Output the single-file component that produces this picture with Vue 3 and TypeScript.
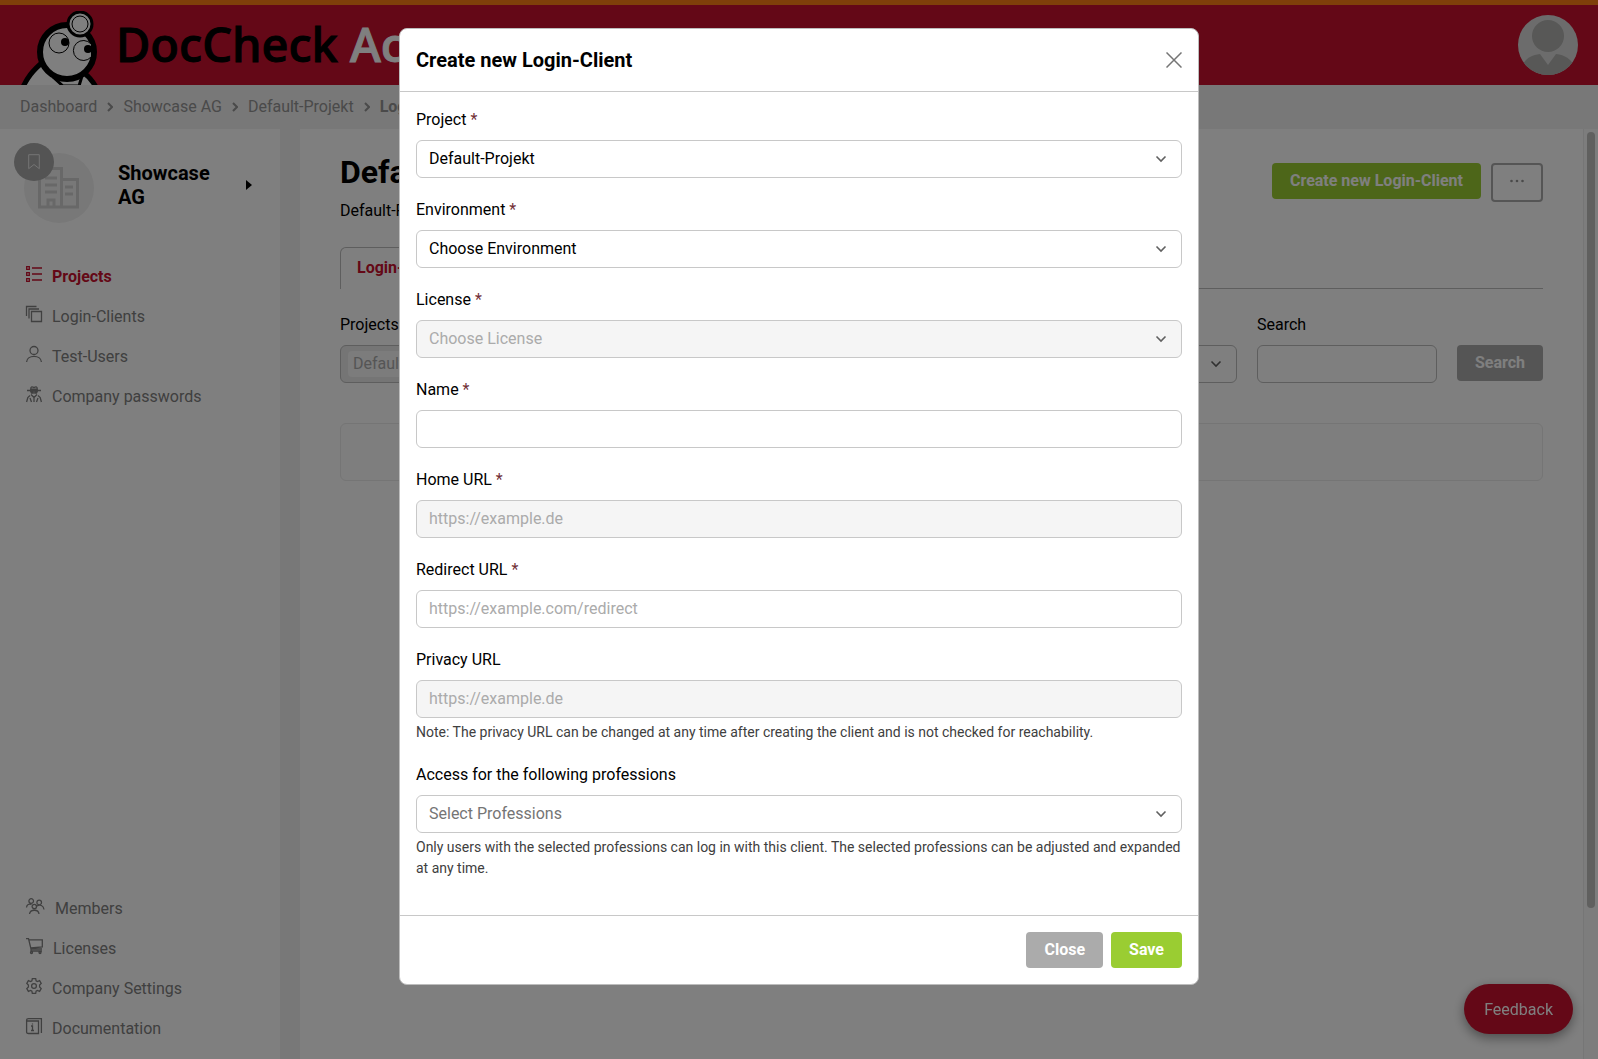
<script setup lang="ts">
import { ref } from 'vue'

interface Field {
  id: string
  label: string
  kind: 'select' | 'input'
  text: string
  required?: boolean
  disabled?: boolean
  muted?: boolean
  note?: string
}

interface NavItem {
  label: string
  icon: string
  width?: number
  active?: boolean
}

const fields: Field[] = [
  { id: 'project', label: 'Project', kind: 'select', text: 'Default-Projekt', required: true },
  { id: 'environment', label: 'Environment', kind: 'select', text: 'Choose Environment', required: true },
  { id: 'license', label: 'License', kind: 'select', text: 'Choose License', required: true, disabled: true },
  { id: 'name', label: 'Name', kind: 'input', text: '', required: true },
  { id: 'home', label: 'Home URL', kind: 'input', text: 'https://example.de', required: true, disabled: true },
  { id: 'redirect', label: 'Redirect URL', kind: 'input', text: 'https://example.com/redirect', required: true },
  {
    id: 'privacy', label: 'Privacy URL', kind: 'input', text: 'https://example.de', disabled: true,
    note: 'Note: The privacy URL can be changed at any time after creating the client and is not checked for reachability.',
  },
  {
    id: 'professions', label: 'Access for the following professions', kind: 'select', text: 'Select Professions', muted: true,
    note: 'Only users with the selected professions can log in with this client. The selected professions can be adjusted and expanded at any time.',
  },
]

const mainNav: NavItem[] = [
  { label: 'Projects', icon: 'list', active: true },
  { label: 'Login-Clients', icon: 'stack' },
  { label: 'Test-Users', icon: 'user' },
  { label: 'Company passwords', icon: 'spy' },
]

const footNav: NavItem[] = [
  { label: 'Members', icon: 'members', width: 19 },
  { label: 'Licenses', icon: 'cart', width: 17 },
  { label: 'Company Settings', icon: 'gear' },
  { label: 'Documentation', icon: 'book' },
]

const icons: Record<string, string> = {
  list: 'M.7.7h2.600v2.600H.7zM.7 6.700h2.600v2.600H.7zM.7 12.700h2.600v2.600H.7zM6 2h10M6 8h10M6 14h10',
  stack: 'M5.500 5.500h10v10h-10zM3 12.500V3h10M.5 10V.5h10',
  user: 'M12 4.500a4 4 0 1 1-8 0a4 4 0 0 1 8 0M.6 16c.4-7.500 14.400-7.500 14.800 0',
  spy: 'M1 4.500h14M4.500 4.500L5 1.500C6 0 7 1.500 8 1.500S10 0 11 1.500l.5 3M4.800 3.200h6.400M5 6h2.200v1H5.500zM8.800 6H11l-.5 1H8.800zM5 8.500l3 3 3-3M8 11.500V16M4 9.500L1.800 11.500.6 16M4 12l1.500 4M12 9.500l2.200 2L15.400 16M12 12l-1.500 4',
  members: 'M7.500 3a2.300 2.300 0 1 1-4.600 0a2.300 2.300 0 0 1 4.600 0M15.500 4.500a2.300 2.300 0 1 1-4.600 0a2.300 2.300 0 0 1 4.600 0M10.500 8.500a2.200 2.200 0 1 1-4.400 0a2.200 2.200 0 0 1 4.400 0M.5 9.500C.8 6.500 3 5.500 5.500 6.500M11 8c3-2 6.500-.5 7 3.500M3.500 16c.8-5 9-5 9.500 0',
  cart: 'M0 .7h2.500L5 11h11M3 1.800h13.300v7L4.700 10M5 11v2h11M6.500 14.500a1 1 0 1 1-2 0a1 1 0 0 1 2 0M15 14.500a1 1 0 1 1-2 0a1 1 0 0 1 2 0',
  gear: 'M6.300.7h3.400l.4 2.100 1.300.7 2.200-.9 1.600 2.800L13.600 7v2l1.600 1.600-1.600 2.800-2.200-.9-1.300.7-.4 2.100H6.300l-.4-2.100-1.300-.7-2.200.9L.8 10.600 2.400 9V7L.8 5.400l1.600-2.800 2.200.9 1.300-.7zM10.400 8a2.400 2.400 0 1 1-4.800 0a2.400 2.400 0 0 1 4.800 0',
  book: 'M2.500 3h10v12.500h-10c-1 0-1.900-.5-1.900-1.500V2C.6 1 1.500.6 2.500.6h12.900V15M.6 2c0 .7 1 1 1.900 1M5 8h1.500v4.500M5 12.500h3M6.500 5.500v1',
}

const crumbs = ['Dashboard', 'Showcase AG', 'Default-Projekt']
const open = ref(true)
</script>

<template>
  <div class="page">
    <header class="topbar">
      <a class="brand" href="#">
        <svg class="mascot" width="80" height="74" viewBox="0 0 80 74" aria-hidden="true">
          <path d="M2 78C7 67 12 60 24 50l40 12c7 5 10 10 13 16z" stroke-width="5" />
          <path d="M33 66l10 9h16l3-10" stroke-width="3" />
          <circle cx="47" cy="41" r="27" fill="#fff" stroke="#000" stroke-width="6" />
          <circle cx="60" cy="13" r="12" fill="#fff" stroke="#000" stroke-width="3" />
          <circle cx="60" cy="13" r="8" fill="#fff" stroke="#000" stroke-width="1" />
          <circle cx="39" cy="32" r="10" fill="#fff" stroke="#000" stroke-width="1" />
          <path d="M71 33a10 10 0 1 0 0 13" stroke-width="1" />
          <circle cx="45" cy="31" r="4" />
          <circle cx="68" cy="38" r="4" />
        </svg>
        <span class="wordmark">DocCheck <span class="light">Access</span></span>
      </a>
      <button class="avatar" type="button" aria-label="Account">
        <svg width="60" height="60" viewBox="0 0 60 60">
          <defs><clipPath id="disc"><circle cx="30" cy="30" r="30" /></clipPath></defs>
          <g clip-path="url(#disc)">
            <path d="M0 0h60v60H0z" />
            <circle cx="30" cy="21" r="16" fill="#b0b0ae" />
            <path d="M4 51c3-7 9-11 18-12l8 11 8-11c9 1 15 5 18 12v9H4z" />
          </g>
        </svg>
      </button>
    </header>

    <nav class="crumbs" aria-label="Breadcrumb">
      <template v-for="c in crumbs" :key="c">
        <a href="#">{{ c }}</a>
        <svg width="6" height="10" viewBox="0 0 6 10"><path d="M1 1l4 4-4 4" /></svg>
      </template>
      <strong>Login-Clients</strong>
    </nav>

    <div class="columns">
      <aside class="sidebar">
        <div class="company">
          <div class="logo">
            <svg class="building" width="42" height="42" viewBox="0 0 42 42">
              <path d="M1.500 40V6.500h6V1.500h16V40zM23.500 12.500h16V40h-16M1.500 40h38M7 11h12M7 18h12M7 25h12M27 20h8M27 27h8M10 40v-7h6v7" />
            </svg>
            <button class="bookmark" type="button" aria-label="Bookmark">
              <svg width="12" height="16" viewBox="0 0 12 16"><path d="M.7.7h10.600v14L6 10.500.7 14.700z" /></svg>
            </button>
          </div>
          <div class="company-link">
            <strong>Showcase AG</strong>
            <svg width="6" height="10" viewBox="0 0 6 10"><path d="M0 0l6 5-6 5z" /></svg>
          </div>
        </div>
        <nav class="nav">
          <a v-for="n in mainNav" :key="n.label" href="#" :class="{ active: n.active }">
            <svg width="16" height="16" viewBox="0 0 16 16"><path :d="icons[n.icon]" /></svg>{{ n.label }}
          </a>
        </nav>
        <nav class="nav bottom">
          <a v-for="n in footNav" :key="n.label" href="#">
            <svg :width="n.width ?? 16" height="16" :viewBox="`0 0 ${n.width ?? 16} 16`"><path :d="icons[n.icon]" /></svg>{{ n.label }}
          </a>
        </nav>
      </aside>

      <main class="main">
        <div class="heading">
          <div>
            <h1>Default-Projekt</h1>
            <p>Default-Projekt</p>
          </div>
          <div class="actions">
            <button class="btn green" type="button">Create new Login-Client</button>
            <button class="more" type="button" aria-label="More">
              <svg width="14" height="4" viewBox="0 0 14 4"><circle cx="1.500" cy="2" r="1.300" /><circle cx="7" cy="2" r="1.300" /><circle cx="12.500" cy="2" r="1.300" /></svg>
            </button>
          </div>
        </div>
        <div class="tabs"><button class="tab" type="button">Login-Clients</button></div>
        <form class="filters" @submit.prevent>
          <div class="filter wide">
            <label for="f-projects">Projects</label>
            <div class="control disabled chips"><select id="f-projects" disabled><option>Default-Projekt</option></select></div>
          </div>
          <div class="filter wide">
            <label for="f-env">Environment</label>
            <div class="control">
              <select id="f-env"><option>All</option></select>
              <svg class="chevron" width="12" height="8" viewBox="0 0 12 8"><path d="M1.500 1.500L6 6l4.500-4.500" /></svg>
            </div>
          </div>
          <div class="filter search">
            <label for="f-search">Search</label>
            <div class="control"><input id="f-search" type="text" /></div>
          </div>
          <button class="btn gray" type="submit">Search</button>
        </form>
        <div class="empty"></div>
      </main>
      <div class="scroll"><div class="thumb"></div></div>
    </div>

    <button class="feedback" type="button">Feedback</button>

    <div v-if="open" class="overlay">
      <section class="modal" role="dialog" aria-modal="true" aria-labelledby="modal-title">
        <header class="modal-head">
          <h2 id="modal-title">Create new Login-Client</h2>
          <button class="close" type="button" aria-label="Close dialog" @click="open = false">
            <svg width="16" height="16" viewBox="0 0 16 16"><path d="M.5.500l15 15M15.500.5l-15 15" /></svg>
          </button>
        </header>
        <form class="modal-body" @submit.prevent>
          <div v-for="f in fields" :key="f.id" class="field">
            <label :for="f.id">{{ f.label }} <span v-if="f.required" class="star">*</span></label>
            <div class="control" :class="{ disabled: f.disabled, muted: f.muted }">
              <template v-if="f.kind === 'select'">
                <select :id="f.id" :disabled="f.disabled"><option>{{ f.text }}</option></select>
                <svg class="chevron" width="12" height="8" viewBox="0 0 12 8"><path d="M1.500 1.500L6 6l4.500-4.500" /></svg>
              </template>
              <input v-else :id="f.id" type="text" :placeholder="f.text" :disabled="f.disabled" />
            </div>
            <p v-if="f.note" class="note">{{ f.note }}</p>
          </div>
        </form>
        <footer class="modal-foot">
          <button class="btn gray" type="button" @click="open = false">Close</button>
          <button class="btn green" type="button">Save</button>
        </footer>
      </section>
    </div>
  </div>
</template>

<style>
body {
  margin: 0;
  overflow: hidden;
}
</style>

<style scoped>
* {
  box-sizing: border-box;
}
.page {
  display: flex;
  flex-direction: column;
  height: 100vh;
  background: #f0f0f0;
  color: #000;
  font: 16px/24px Roboto, sans-serif;
}
button,
input,
select {
  font: inherit;
  color: inherit;
}
button {
  padding: 0;
  border: 0;
  background: none;
  cursor: pointer;
}
a {
  color: inherit;
  text-decoration: none;
}
h1,
h2,
p {
  margin: 0;
}
svg path {
  fill: none;
  stroke: currentColor;
}

.topbar {
  display: flex;
  flex: none;
  align-items: center;
  justify-content: space-between;
  height: 85px;
  padding: 0 20px;
  border-top: 5px solid #ff8014;
  background: #c8102e;
}
.brand {
  display: flex;
  align-self: stretch;
  align-items: flex-end;
  gap: 16px;
}
.mascot {
  display: block;
}
.mascot path {
  fill: #fff;
  stroke: #000;
}
.wordmark {
  align-self: center;
  padding-bottom: 2px;
  color: #000;
  font: 500 47px/56px "Noto Sans", sans-serif;
  white-space: nowrap;
  -webkit-text-stroke: 1px currentColor;
}
.light {
  color: #fff;
}
.avatar {
  display: flex;
}
.avatar path {
  fill: #b0b0ae;
  stroke: none;
}
.avatar path:first-child {
  fill: #d8d8d8;
}

.crumbs {
  display: flex;
  flex: none;
  align-items: center;
  gap: 10px;
  height: 44px;
  padding: 0 20px;
  color: #949494;
}
.crumbs path {
  stroke-width: 2;
}

.columns {
  display: flex;
  flex: 1;
  min-height: 0;
}
.sidebar {
  display: flex;
  flex: none;
  flex-direction: column;
  width: 280px;
  margin-right: 20px;
  padding-bottom: 10px;
  background: #fff;
}
.company {
  display: flex;
  padding: 24px 28px 0 24px;
}
.logo {
  position: relative;
  display: flex;
  align-items: center;
  justify-content: center;
  width: 70px;
  height: 70px;
  border-radius: 50%;
  background: #f0f0f0;
  color: #d0d0d0;
}
.building path {
  stroke-width: 3;
}
.bookmark {
  position: absolute;
  top: -10px;
  left: -10px;
  display: flex;
  align-items: center;
  justify-content: center;
  width: 40px;
  height: 38px;
  border-radius: 50%;
  background: #a8a8a8;
  color: #e8e8e8;
}
.company-link {
  display: flex;
  flex: 1;
  align-items: center;
  justify-content: space-between;
  height: 64px;
  margin-left: 24px;
}
.company-link strong {
  width: 104px;
  font-size: 20px;
}
.company-link path {
  fill: #000;
  stroke: none;
}
.nav {
  display: flex;
  flex-direction: column;
  padding: 34px 26px 0;
  color: #808080;
}
.nav a {
  display: flex;
  gap: 10px;
  height: 40px;
  line-height: 40px;
}
.nav svg {
  margin-top: 9px;
  overflow: visible;
}
.nav path {
  stroke-width: 1.3;
}
.nav .active {
  color: #c8102e;
  font-weight: 700;
}
.nav.bottom {
  margin-top: auto;
}

.main {
  flex: 1;
  min-width: 0;
  padding: 24px 40px;
  background: #fff;
}
.heading {
  display: flex;
  justify-content: space-between;
}
h1 {
  font-size: 32px;
  line-height: 38px;
}
.heading p {
  margin-top: 8px;
}
.actions {
  display: flex;
  align-items: flex-start;
  gap: 10px;
  padding-top: 10px;
}
.btn {
  height: 36px;
  padding: 0 18px;
  border-radius: 4px;
  color: #fff;
  font-weight: 700;
}
.green {
  background: #9acd32;
}
.gray {
  background: #ababab;
}
.more {
  display: flex;
  align-items: center;
  justify-content: center;
  width: 52px;
  height: 39px;
  padding-bottom: 4px;
  border: 2px solid #ababab;
  border-radius: 4px;
}
.more circle {
  fill: #959595;
}
.tabs {
  display: flex;
  height: 42px;
  margin-top: 24px;
  border-bottom: 1px solid #bcbcbc;
}
.tab {
  height: 42px;
  padding: 0 16px 2px;
  border: 1px solid #bcbcbc;
  border-bottom: 0;
  border-radius: 6px 6px 0 0;
  background: #fff;
  color: #c8102e;
  font-weight: 700;
}
.filters {
  display: flex;
  gap: 20px;
  margin-top: 24px;
}
.filter {
  display: flex;
  flex-direction: column;
  gap: 8px;
}
.wide {
  flex: 1;
}
.search {
  width: 180px;
}
.filters .btn {
  margin-top: 32px;
}
.empty {
  height: 58px;
  margin-top: 40px;
  border: 1px solid #eaeaea;
  border-radius: 6px;
  background: #fcfcfc;
}
.scroll {
  flex: none;
  width: 15px;
  padding: 3px;
  border-left: 1px solid #ededed;
  background: #fafafa;
}
.thumb {
  width: 8px;
  height: 84%;
  border-radius: 4px;
  background: #c0c0be;
}

.control {
  position: relative;
  display: flex;
  height: 38px;
  border: 1px solid #c8c8c8;
  border-radius: 6px;
  background: #fff;
}
.control select,
.control input {
  flex: 1;
  min-width: 0;
  width: 100%;
  padding: 0 12px;
  border: 0;
  background: none;
  appearance: none;
  outline: none;
  opacity: 1;
}
.disabled {
  background: #f5f5f5;
  color: #ababab;
}
.chips {
  padding: 5px 7px;
  background: #eaeaea;
}
.control.chips select {
  padding: 0 5px;
  border-radius: 4px;
  background: #f8f8f8;
}
.muted {
  color: #757575;
}
.control input::placeholder {
  color: #ababab;
  opacity: 1;
}
.chevron {
  position: absolute;
  top: 14px;
  right: 14px;
  color: #606060;
  pointer-events: none;
}
.chevron path {
  stroke-width: 1.6;
}
.filters .control {
  border-color: #bcbcbc;
}

.feedback {
  position: fixed;
  right: 25px;
  bottom: 25px;
  height: 50px;
  padding: 1px 20px 0;
  border-radius: 25px;
  background: #c8102e;
  box-shadow: 0 4px 12px rgba(0, 0, 0, 0.4);
  color: #fff;
}

.overlay {
  position: fixed;
  inset: 0;
  display: flex;
  align-items: flex-start;
  justify-content: center;
  padding-top: 28px;
  background: rgba(0, 0, 0, 0.5);
}
.modal {
  width: 800px;
  max-width: 100%;
  border: 1px solid #bdbdbd;
  border-radius: 8px;
  background: #fff;
}
.modal-head {
  display: flex;
  align-items: center;
  justify-content: space-between;
  height: 63px;
  padding: 0 16px;
  border-bottom: 1px solid #c8c8c8;
}
h2 {
  font-size: 20px;
  line-height: 24px;
}
.close {
  display: flex;
  color: #757575;
}
.close path {
  stroke-width: 1.5;
}
.modal-body {
  display: flex;
  flex-direction: column;
  gap: 20px;
  padding: 16px 16px 36px;
}
.field label {
  display: block;
  margin-bottom: 8px;
}
.star {
  color: #722f37;
}
.note {
  margin-top: 4px;
  color: #404040;
  font-size: 14px;
  line-height: 21px;
}
.modal-foot {
  display: flex;
  justify-content: flex-end;
  gap: 8px;
  padding: 16px;
  border-top: 1px solid #c8c8c8;
}
</style>
